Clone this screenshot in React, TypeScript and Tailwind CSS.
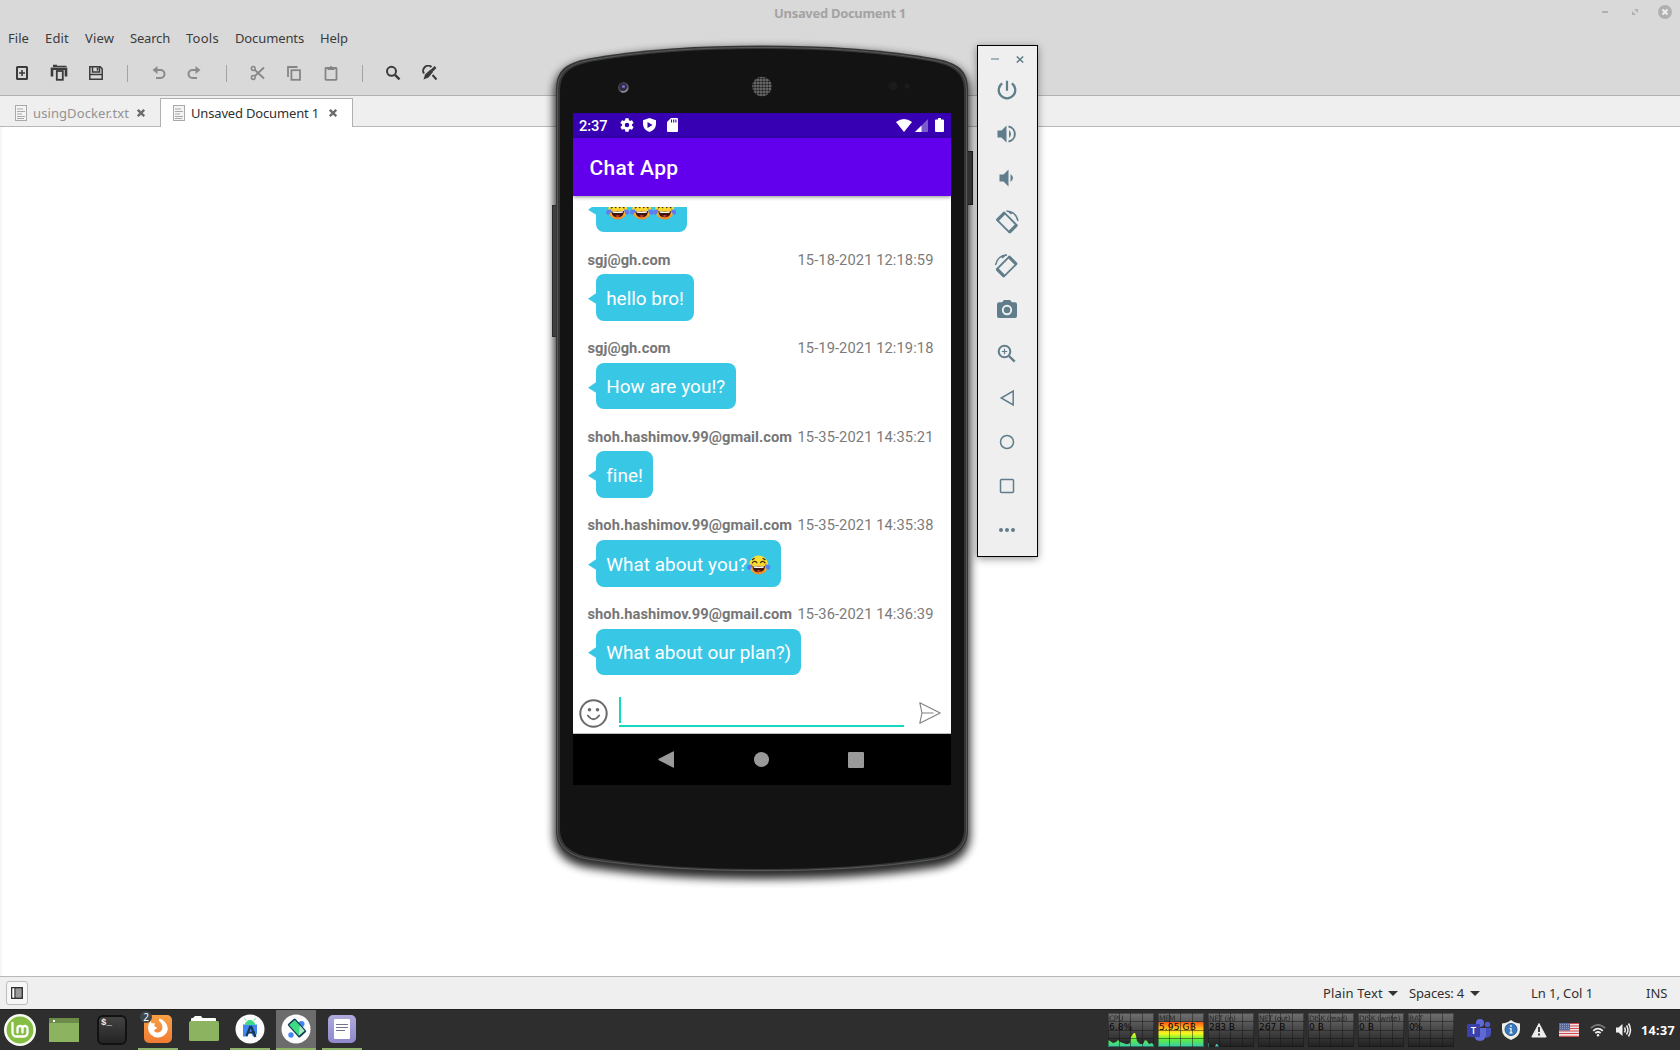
import React, { useLayoutEffect, useRef, useState } from "react";

// Single-line text whose tracking is computed so that it spans a given width.
function Fit({ w, className = "", children }: { w: number; className?: string; children: string }) {
  const ref = useRef<HTMLSpanElement>(null);
  const [ls, setLs] = useState(0);
  useLayoutEffect(() => {
    if (ref.current) {
      const natural = ref.current.getBoundingClientRect().width;
      setLs((w - natural) / children.length);
    }
  }, []);
  return (
    <span ref={ref} className={"inline-block shrink-0 whitespace-pre " + className} style={{ letterSpacing: ls + "px" }}>
      {children}
    </span>
  );
}

const menus: [string, number][] = [
  ["File", 21], ["Edit", 24], ["View", 29], ["Search", 40], ["Tools", 33], ["Documents", 69], ["Help", 28],
];

function Sep() {
  return <div className="h-[17px] w-px bg-[#a3a3a3]" />;
}

function Toolbar() {
  return (
    <div className="flex h-[49px] items-center pb-px pl-[14px] text-[#3b3b3b]">
      <svg className="h-4 w-4" viewBox="0 0 16 16" fill="none" stroke="currentColor" strokeWidth="2">
        <rect x="3" y="2" width="10" height="12" rx="0.5" />
        <path d="M5 8h6M8 5v6" strokeWidth="1.6" />
      </svg>
      <svg className="ml-5 h-[18px] w-[18px]" viewBox="0 0 18 18" fill="none" stroke="currentColor">
        <path d="M3 1.300h4M3 2.300h13.500" strokeWidth="1.300" />
        <path d="M2 12.500V4.800h14V12.500" strokeWidth="2.600" />
        <rect x="6.800" y="7" width="6" height="8.800" fill="#d9d9d9" strokeWidth="1.800" />
      </svg>
      <svg className="ml-5 h-4 w-4" viewBox="0 0 16 16" fill="none" stroke="currentColor" strokeWidth="1.500">
        <path d="M1.800 1.800h10.400l2 2v10.400H1.800zM4.500 2v5h7V2M2 9.500h12" />
        <path d="M9.500 2.500v3" strokeWidth="1.600" />
      </svg>
      <div className="ml-[23px]"><Sep /></div>
      <div className="ml-[23px] flex text-[#8b8b8b]">
        <svg className="h-4 w-4" viewBox="0 0 16 16" fill="none" stroke="currentColor" strokeWidth="2">
          <path d="M3 5h6.500a4 4 0 0 1 0 8H5" />
          <path d="M6.500 1L1.500 5l5 4z" fill="currentColor" stroke="none" />
        </svg>
        <svg className="ml-[19px] h-4 w-4" viewBox="0 0 16 16" fill="none" stroke="currentColor" strokeWidth="2">
          <path d="M13 5H6.500a4 4 0 0 0 0 8H11" />
          <path d="M9.500 1l5 4-5 4z" fill="currentColor" stroke="none" />
        </svg>
      </div>
      <div className="ml-[24px]"><Sep /></div>
      <div className="ml-[23px] flex text-[#858585]">
        <svg className="h-4 w-4" viewBox="0 0 16 16" fill="none" stroke="currentColor" strokeWidth="1.500">
          <circle cx="3.300" cy="3.500" r="1.900" />
          <circle cx="3.300" cy="12.500" r="1.900" />
          <path d="M4.800 4.800L14 13.500M4.800 11.200L14 2.500" strokeWidth="1.800" />
        </svg>
        <svg className="ml-5 h-4 w-4" viewBox="0 0 16 16" fill="none" stroke="currentColor" strokeWidth="1.800">
          <path d="M2 12V2h9.500" />
          <rect x="5.400" y="5.200" width="8.600" height="9.600" />
        </svg>
        <svg className="ml-[21px] h-4 w-4" viewBox="0 0 16 16" fill="none" stroke="currentColor" strokeWidth="1.800">
          <rect x="2.500" y="3" width="11" height="11.800" rx="0.500" />
          <path d="M4.500 5V2.500h2a1.500 1.500 0 0 1 3 0h2V5z" fill="currentColor" stroke="none" />
        </svg>
      </div>
      <div className="ml-[23px]"><Sep /></div>
      <svg className="ml-[22px] h-4 w-4" viewBox="0 0 16 16" fill="none" stroke="currentColor" strokeWidth="2">
        <circle cx="6.500" cy="6.300" r="4.500" />
        <path d="M10 9.800l4.500 4.500" strokeWidth="2.400" />
      </svg>
      <svg className="ml-[21px] h-4 w-4" viewBox="0 0 16 16" fill="none" stroke="currentColor" strokeWidth="2">
        <path d="M2 8.500A5 5 0 0 1 9.500 2" />
        <path d="M1.500 14.500l1.500-5 5.500-5 2.500 2.500-4.500 5.500z" fill="currentColor" stroke="none" />
        <path d="M9.500 6l4-4" strokeWidth="2.600" />
        <path d="M10.500 10l4 4.500" />
      </svg>
    </div>
  );
}

function DocIcon() {
  return (
    <svg className="h-4 w-3 shrink-0" viewBox="0 0 12 16" fill="none" stroke="#a9a9a9">
      <rect x="0.500" y="0.500" width="11" height="15" fill="#f4f4f4" />
      <path d="M2 4h6M2 6.500h8M2 9h5M2 11.500h8M2 13.500h7" />
    </svg>
  );
}

function TabClose() {
  return (
    <svg className="h-2 w-2 shrink-0" viewBox="0 0 8 8" stroke="#6b6b6b" strokeWidth="2.300">
      <path d="M0.800 0.800l6.400 6.400M7.200 0.800L0.800 7.200" />
    </svg>
  );
}

function Caret() {
  return (
    <svg className="h-[5px] w-[10px] shrink-0" viewBox="0 0 10 5" fill="#333">
      <path d="M0 0h10L5 5z" />
    </svg>
  );
}

const meters = [
  ["CPU", "6.8%"], ["MEM", "5.95 GB"], ["NET (in)", "283 B"], ["NET (out)", "267 B"],
  ["DISK (read)", "0 B"], ["DISK (write)", "0 B"], ["BAT", "0%"],
];
const labelW = [14, 16, 26.500, 31, 38, 41, 14];
const valueW = [23, 37, 26, 26.500, 15, 15, 13];

function Meter({ i }: { i: number }) {
  return (
    <div className="relative h-[34px] w-[46px] shrink-0 overflow-hidden bg-linear-to-b from-[#707070] to-[#202020]">
      <svg className="absolute inset-0 h-[34px] w-[46px]" viewBox="0 0 46 34">
        <defs>
          <linearGradient id="heat" x1="0" y1="9" x2="0" y2="34" gradientUnits="userSpaceOnUse">
            <stop offset="0" stopColor="#ff5a10" />
            <stop offset="0.300" stopColor="#ffc81e" />
            <stop offset="0.460" stopColor="#f4f81e" />
            <stop offset="0.680" stopColor="#63f03c" />
            <stop offset="1" stopColor="#35c9b0" />
          </linearGradient>
        </defs>
        {i === 0 && (
          <path fill="url(#heat)" d="M0 34V27l2 1 3 2 3-1 2-2 2 2 3 1 3 1 2 0 2-1 1-6 2-3 1-1 1 0 1 3 1 5 3 3 3 0 2-4 2 1 2 3 3-1 2 2V34z" />
        )}
        {i === 1 && <rect y="9" width="46" height="25" fill="url(#heat)" />}
        {i === 2 && <path fill="#4fc0b4" d="M0 34v-4h1v4zM7 34l1-3 1 0 1 1 1 2z" />}
        <path d="M11.500 0v34M22.500 0v34M34.500 0v34M0 8.500h46M0 17.500h46M0 25.500h46" stroke="#151515" strokeOpacity="0.480" fill="none" />
        <rect x="0.500" y="0.500" width="45" height="33" fill="none" stroke="#161616" strokeOpacity="0.450" />
      </svg>
      <div className="relative flex flex-col items-start pl-[1px] pt-[2px] font-['DejaVu_Sans'] text-[#1c1c1c]">
        <Fit w={labelW[i]} className="text-[7.500px] leading-[8px] opacity-80">{meters[i][0]}</Fit>
        <Fit w={valueW[i]} className="text-[9px] leading-[9px] text-[#080808]">{meters[i][1]}</Fit>
      </div>
    </div>
  );
}

function Taskbar() {
  return (
    <div className="flex h-[41px] items-start border-t border-[#202020] bg-[#2e2e2e]">
      <div className="flex h-10 w-[46px] items-center pl-1">
        <svg className="h-8 w-8" viewBox="0 0 32 32">
          <circle cx="16" cy="16" r="16" fill="#f7fbf2" />
          <circle cx="16" cy="16" r="13.400" fill="#86be43" />
          <path d="M8.500 9v9.500a4 4 0 0 0 4 4h7.500a3.500 3.500 0 0 0 3.500-3.500v-4.500a2.500 2.500 0 0 0-5 0v4M18.500 14.500a2.500 2.500 0 0 0-5 0v4" fill="none" stroke="#fff" strokeWidth="2.300" strokeLinecap="round" />
        </svg>
      </div>
      <div className="flex h-10 w-[46px] items-center pl-[3px]">
        <div className="h-6 w-[30px] bg-[#8cb360]">
          <div className="h-[5px] bg-[#6c8b49] pl-1 pt-0.5"><div className="h-0.5 w-0.5 bg-white" /></div>
        </div>
      </div>
      <div className="flex h-10 w-[46px] items-center pl-[5px]">
        <div className="h-[30px] w-[30px] rounded-[6px] border-2 border-[#121212] bg-linear-to-b from-[#434343] to-[#242424] pl-[2px] pt-[2px] font-['Liberation_Mono'] text-[9px] font-bold leading-[9px] text-[#eee]">$_</div>
      </div>
      <div className="relative flex h-10 w-10 items-center justify-center border-b-2 border-[#8db367]">
        <div className="flex h-7 w-7 items-center justify-center rounded-[5px] bg-linear-to-b from-[#f7a044] to-[#f17b34]">
          <svg className="h-[22px] w-[22px]" viewBox="0 0 22 22">
            <path d="M1 10c0-3 1-5 3-7l0.500 2.500C6 5 7 5 8 5.500 6.500 8 8 9 10 9.500c0 1.500-2 1.500-3 3 1 2.500 5 3 7.500 0C17 9 14 4 12 3c0-1 0-2 0.500-2.500C17 2 21 6 20.800 11.500A10 10 0 0 1 1 10z" fill="#fff" />
          </svg>
        </div>
        <div className="absolute left-[2px] top-[1px] flex h-3 w-3 items-center justify-center rounded-full bg-[#3b464d] font-['Noto_Sans'] text-[10px] text-white">2</div>
      </div>
      <div className="flex h-10 w-[52px] items-center justify-center">
        <svg className="h-7 w-[30px]" viewBox="0 0 30 28">
          <path d="M2 6V3q0-1 1-1h1l2-2h6l1.500 2H26q1 0 1 1v3z" fill="#fff" />
          <rect y="5" width="30" height="20" rx="1.500" fill="#8cb360" />
        </svg>
      </div>
      <div className="flex h-10 w-10 items-center justify-center border-b-2 border-[#8db367]">
        <svg className="h-[30px] w-[30px]" viewBox="0 0 30 30">
          <circle cx="15" cy="15" r="14.500" fill="#fcfcfc" />
          <path d="M8 10.500h14v9l-2 3h-2l-3-6-3 6H8z" fill="#4285f4" />
          <path d="M10.500 10.500a4.500 4 0 0 1 9 0zM11 6.500l-1.500-2M19 6.500l1.500-2" fill="#3ddc84" stroke="#3ddc84" />
          <path d="M15.500 12L11.500 22M16 12l4.500 11M12 18.500h8" fill="none" stroke="#123a54" strokeWidth="2.200" />
        </svg>
      </div>
      <div className="ml-1.5 flex h-10 w-10 items-center justify-center border-b-2 border-[#8db367] bg-[#6c6c6c]">
        <svg className="h-[30px] w-[30px]" viewBox="0 0 30 30">
          <circle cx="15" cy="15" r="14.500" fill="#fcfcfc" />
          <circle cx="10" cy="21" r="2.700" fill="#4285f4" />
          <circle cx="20.500" cy="10" r="3" fill="#4285f4" />
          <g transform="rotate(-42 16 14)">
            <rect x="11" y="5" width="10" height="18" rx="1.500" fill="#123a54" />
            <rect x="12.200" y="6.500" width="7.600" height="14.500" fill="#3ddc84" />
            <path d="M12.200 21l7.600-7v7z" fill="#a9e8c5" />
          </g>
        </svg>
      </div>
      <div className="ml-1.5 flex h-10 w-10 items-center justify-center border-b-2 border-[#8db367]">
        <div className="flex h-[28px] w-[28px] items-center justify-center rounded-[5px] bg-linear-to-b from-[#b0aadd] to-[#8d89cb]">
          <div className="flex h-5 w-4 flex-col gap-[2px] rounded-[1px] bg-white px-[2px] pt-[5px]">
            <div className="h-px bg-[#73738e]" /><div className="h-px bg-[#73738e]" />
            <div className="h-px w-[9px] bg-[#73738e]" />
          </div>
        </div>
      </div>
      <div className="ml-auto flex gap-1 pt-[3px]">
        {meters.map((m, i) => <Meter key={m[0]} i={i} />)}
      </div>
      <div className="flex h-10 w-[226px] items-center pl-[13px]">
        <svg className="h-6 w-6" viewBox="0 0 24 24">
          <circle cx="20.500" cy="6.500" r="2.700" fill="#5059c9" />
          <circle cx="13" cy="5" r="4" fill="#6068d4" />
          <path d="M16 10h8v6a4 4 0 0 1-6 3z" fill="#464eb8" />
          <path d="M7 10h12v7a6 6 0 0 1-12 0z" fill="#6068d4" />
          <rect y="6" width="13" height="13" rx="1" fill="#3a41a8" />
          <text x="3.700" y="15.700" fill="#fff" fontSize="9" fontWeight="700" fontFamily="Lato, sans-serif">T</text>
        </svg>
        <svg className="ml-2.5 h-5 w-5" viewBox="0 0 20 20">
          <path d="M10 0l3 2q3 1 6 1.500v6q0 7-9 10.500Q1 16.500 1 9.500v-6Q4 3 7 2z" fill="#eeeeea" />
          <circle cx="10" cy="9.500" r="6" fill="#3a7bbd" stroke="#24588f" />
          <path d="M10 5v2M8.500 8.500H10V13M8.500 13h3" stroke="#fff" strokeWidth="1.200" fill="none" />
        </svg>
        <svg className="ml-[10px] h-4 w-4" viewBox="0 0 16 16">
          <path d="M8 1.500L15.200 15H0.800z" fill="#eee" stroke="#eee" strokeLinejoin="round" />
          <path d="M8 5v5M8 11.500v2" stroke="#2e2e2e" strokeWidth="1.800" />
        </svg>
        <svg className="ml-3 h-[14px] w-5" viewBox="0 0 20 14">
          <rect width="20" height="14" fill="#efe4e3" />
          <path d="M0 0.500h20M0 3h20M0 5.500h20M0 8h20M0 10.500h20M0 13.300h20" stroke="#cf4b51" strokeWidth="1.200" />
          <rect width="11" height="7.500" fill="#56699e" />
          <path d="M1 1.500h9M1 3.500h9M1 5.500h9" stroke="#a9b4d0" strokeWidth="0.700" strokeDasharray="1 1" />
        </svg>
        <svg className="ml-[11px] h-[13px] w-4" viewBox="0 0 16 13" fill="none" stroke="#eee" strokeWidth="1.800">
          <path d="M0.800 4.200Q8-2.500 15.200 4.200" stroke="#777" />
          <path d="M3.200 6.800q4.800-4.300 9.600 0" />
          <path d="M5.300 9.200q2.700-2.400 5.400 0" />
          <circle cx="8" cy="11.300" r="1.200" fill="#eee" stroke="none" />
        </svg>
        <svg className="ml-[10px] h-4 w-4" viewBox="0 0 16 16" fill="none" stroke="#eee" strokeWidth="1.500">
          <path d="M0 5.500h2.500L6.500 2v12l-4-3.500H0z" fill="#eee" stroke="none" />
          <path d="M8.500 5.500q1.500 2.500 0 5M10.500 3.500q3 4.500 0 9M12.500 1.500q4 6.500 0 13" />
        </svg>
        <Fit w={34} className="ml-[9px] pt-[3px] font-['Noto_Sans'] text-[12.500px] font-bold text-white">14:37</Fit>
      </div>
    </div>
  );
}

// Tears-of-joy face; the drawing fills a 24×20 box.
function Joy() {
  return (
    <svg className="h-[20px] w-[23.400px] shrink-0" viewBox="0 0 24 20">
      <defs>
        <linearGradient id="joy" x1="0" y1="0" x2="0" y2="1">
          <stop offset="0.400" stopColor="#fde030" />
          <stop offset="1" stopColor="#f08423" />
        </linearGradient>
      </defs>
      <circle cx="12" cy="10" r="9.700" fill="url(#joy)" />
      <path d="M5.500 7.800q2.200-3 4.600-0.300M13.900 7.500q2.400-2.700 4.600 0.300M7.500 3.300l-2 1.200M16.500 3.300l2 1.200" stroke="#422b0d" strokeWidth="1.300" fill="none" strokeLinecap="round" />
      <path d="M5.500 11q6.500 1.200 13 0-0.300 6.500-6.500 6.500t-6.500-6.500z" fill="#3d160f" />
      <path d="M6.500 11.300q5.500 1 11 0l-0.500 1.500q-5 0.700-10 0z" fill="#fff" />
      <path d="M9.300 16.200q2.700-1.600 5.400 0-2.700 1.700-5.400 0z" fill="#ef4a4a" />
      <path d="M5.500 9.500Q0 8.800 0 12.500q0.300 2.700 2.800 2.300Q5 14.200 5.500 9.500zM18.500 9.500Q24 8.800 24 12.500q-0.300 2.700-2.800 2.300Q19 14.200 18.500 9.500z" fill="#5f7df0" />
    </svg>
  );
}

type Msg = { from?: string; fw: number; at: string; text: string; tw: number; joys: number };
const mail = "shoh.hashimov.99@gmail.com";
const messages: Msg[] = [
  { fw: 0, at: "", text: "", tw: 0, joys: 3 },
  { from: "sgj@gh.com", fw: 83, at: "15-18-2021 12:18:59", text: "hello bro!", tw: 77.700, joys: 0 },
  { from: "sgj@gh.com", fw: 83, at: "15-19-2021 12:19:18", text: "How are you!?", tw: 119.200, joys: 0 },
  { from: mail, fw: 204.500, at: "15-35-2021 14:35:21", text: "fine!", tw: 36, joys: 0 },
  { from: mail, fw: 204.500, at: "15-35-2021 14:35:38", text: "What about you?", tw: 141, joys: 1 },
  { from: mail, fw: 204.500, at: "15-36-2021 14:36:39", text: "What about our plan?)", tw: 185, joys: 0 },
];

function Message({ m }: { m: Msg }) {
  return (
    <div className="flex h-[88.600px] shrink-0 flex-col pt-[6.400px]">
      <div className="flex h-[24px] shrink-0 items-center justify-between pb-[4px] pr-[17.500px] text-[14.700px] leading-[17px] text-[#767676]">
        {m.from && <Fit w={m.fw} className="font-bold">{m.from}</Fit>}
        {m.from && <Fit w={136} className="text-[#7b7b7b]">{m.at}</Fit>}
      </div>
      <div className="flex h-[46.600px] shrink-0 items-center">
        <svg className="mt-[2px] h-[11px] w-[8.500px] shrink-0" viewBox="0 0 8.500 11" fill="#39c7e6">
          <path d="M8.500 0v11L0 5.700z" />
        </svg>
        <div className="flex h-full items-center rounded-[8px] bg-[#39c7e6] px-[10.200px] pt-[3px] text-[18.900px] text-white">
          {m.text && <Fit w={m.tw}>{m.text}</Fit>}
          {Array.from({ length: m.joys }, (_, k) => <Joy key={k} />)}
        </div>
      </div>
    </div>
  );
}

function PhoneScreen() {
  return (
    <div className="absolute left-[28px] top-[78px] flex h-[672px] w-[378px] flex-col overflow-hidden bg-white font-['Roboto']">
      <div className="flex h-[24.700px] shrink-0 items-center bg-[#3700b3] pl-[6px] text-white">
        <Fit w={28.500} className="pt-[2px] text-[14.700px] font-medium">2:37</Fit>
        <svg className="ml-[12px] h-[14px] w-[14px]" viewBox="2 2 20 20" fill="#fff">
          <path d="M19.140 12.940c.04-.3.060-.61.060-.94s-.02-.64-.07-.94l2.030-1.580a.49.49 0 0 0 .12-.61l-1.920-3.320a.49.49 0 0 0-.59-.22l-2.390.96c-.5-.38-1.030-.7-1.620-.94l-.36-2.540A.48.48 0 0 0 13.920 2.400h-3.840a.48.48 0 0 0-.47.410l-.36 2.540c-.59.240-1.130.570-1.620.940l-2.390-.96a.48.48 0 0 0-.59.220L2.740 8.870a.48.48 0 0 0 .12.610l2.030 1.580c-.05.300-.09.630-.09.940s.02.640.070.940l-2.030 1.580a.49.49 0 0 0-.12.610l1.920 3.320c.12.220.37.290.59.220l2.390-.96c.5.380 1.030.7 1.620.94l.36 2.540c.05.240.24.410.48.410h3.840c.24 0 .44-.17.47-.41l.36-2.540c.59-.24 1.130-.56 1.620-.94l2.390.96c.22.080.47 0 .59-.22l1.920-3.320a.48.48 0 0 0-.12-.61zM12 15.200a3.200 3.200 0 1 1 0-6.400 3.200 3.200 0 0 1 0 6.400z" />
        </svg>
        <svg className="ml-[9.500px] h-[14px] w-[13px]" viewBox="0 0 13 14">
          <path d="M6.500 0L13 2.200v4Q12.500 12 6.500 14 0.500 12 0 6.200v-4z" fill="#fff" />
          <path d="M4.500 4v6l5-3z" fill="#3700b3" />
        </svg>
        <svg className="ml-[11px] h-[14px] w-[11px]" viewBox="0 0 11 14">
          <path d="M4 0h6q1 0 1 1v12q0 1-1 1H1q-1 0-1-1V4z" fill="#fff" />
          <path d="M4.500 1.500v3M6.700 1.500v3M8.900 1.500v3" stroke="#3700b3" strokeWidth="1.100" />
        </svg>
        <svg className="ml-auto h-[13px] w-4" viewBox="0 0 16 13" fill="#fff"><path d="M0 3Q8-3 16 3L8 13z" /></svg>
        <svg className="ml-[3px] h-[13px] w-[13px]" viewBox="0 0 13 13" fill="#fff">
          <path d="M0 13L13 0v13z" opacity="0.350" /><path d="M0 13l6.500-6.500V13z" />
        </svg>
        <svg className="ml-[7px] mr-[7px] h-[14px] w-[9px]" viewBox="0 0 9 14" fill="#fff">
          <path d="M3 0h3v1.500h2q1 0 1 1V13q0 1-1 1H1q-1 0-1-1V2.500q0-1 1-1h2z" />
        </svg>
      </div>
      <div className="z-10 flex h-[58.600px] shrink-0 items-center bg-[#6200ee] pl-[16.500px] pt-[4px] text-white shadow-[0_1px_4px_rgba(0,0,0,0.45)]">
        <Fit w={89} className="text-[21px] font-medium">Chat App</Fit>
      </div>
      <div className="mt-[10.500px] flex h-[482px] shrink-0 flex-col justify-end overflow-hidden pb-[2px] pl-[14.500px]">
        {messages.map((m, k) => <Message key={k} m={m} />)}
      </div>
      <div className="flex h-[45.500px] shrink-0 items-start border-b border-[#bbb] pl-[6px]">
        <svg className="mt-[10px] h-[29px] w-[29px]" viewBox="0 0 29 29" fill="none" stroke="#6b6b6b" strokeWidth="2">
          <circle cx="14.500" cy="14.500" r="13.200" />
          <circle cx="10.500" cy="10.700" r="1.800" fill="#6b6b6b" stroke="none" />
          <circle cx="18.500" cy="10.700" r="1.800" fill="#6b6b6b" stroke="none" />
          <path d="M8.800 16.500q5.700 7.500 11.400 0" strokeLinecap="round" strokeWidth="1.800" />
        </svg>
        <div className="ml-[11px] mt-[8px] h-[30px] w-[285px] border-b-2 border-[#14d8c0]">
          <div className="h-[26px] w-[2px] bg-[#14d8c0]" />
        </div>
        <svg className="ml-[15px] mt-[13.500px] h-[22px] w-[22px]" viewBox="0 0 22 22" fill="none" stroke="#808080" strokeWidth="1.100" strokeLinejoin="round">
          <path d="M0.800 0.800L21.200 11 0.800 21.200 3 11zM3 11h11.500" />
        </svg>
      </div>
      <div className="flex grow items-center bg-black pl-[85px]">
        <svg className="h-[17px] w-4" viewBox="0 0 16 17" fill="#999"><path d="M15 0.500q1-0.500 1 0.500v15q0 1-1 0.500L0.800 9.200q-1-0.700 0-1.400z" /></svg>
        <div className="ml-[80px] h-[15px] w-[15px] rounded-full bg-[#999]" />
        <div className="ml-[79px] h-4 w-4 rounded-[1px] bg-[#999]" />
      </div>
    </div>
  );
}

const bodyPath = "M11 55C11 36 20 28 43 23.500C95 14 155 10.500 217 10.500C279 10.500 339 14 391 23.500C414 28 423 36 423 55V795C423 812 413 821.500 391 825.500C335 834 275 837 217 837C159 837 99 834 43 825.500C21 821.500 11 812 11 795Z";
const facePath = "M15 57C15 39 23 32 45 27C97 17.500 157 14 217 14C277 14 337 17.500 389 27C411 32 419 39 419 57V793C419 809 410 818 389 822C333 831 275 834 217 834C159 834 101 831 45 822C24 818 15 809 15 793Z";

function Phone() {
  return (
    <div className="absolute left-[545px] top-[35px] h-[870px] w-[434px]">
      <svg className="absolute inset-0 h-[870px] w-[434px] overflow-visible" viewBox="0 0 434 870">
        <defs>
          <filter id="soft" x="-20%" y="-20%" width="140%" height="140%"><feGaussianBlur stdDeviation="5" /></filter>
          <pattern id="mesh" width="3" height="3" patternUnits="userSpaceOnUse">
            <rect width="3" height="3" fill="#6a6a6a" /><circle cx="1.500" cy="1.500" r="1.100" fill="#1a1a1a" />
          </pattern>
        </defs>
        <path d={bodyPath} transform="translate(0 5)" fill="#000" stroke="#000" strokeWidth="4" opacity="0.850" filter="url(#soft)" />
        <rect x="7.500" y="170.500" width="5" height="131" fill="#3f3f3f" stroke="#2a2a2a" />
        <rect x="422.500" y="116.500" width="5" height="53" fill="#333" stroke="#1c1c1c" />
        <path d={bodyPath} fill="#343536" />
        <path d={bodyPath} fill="none" stroke="#58595b" transform="translate(1.500 2) scale(0.993 0.996)" />
        <path d={facePath} fill="#131313" />
        <circle cx="78.500" cy="52.500" r="5.300" fill="#5f5d66" />
        <circle cx="78" cy="52" r="4" fill="#302c48" />
        <circle cx="78.500" cy="51.500" r="1.600" fill="#6d6fbb" />
        <path d="M76 56.500a4.500 4.500 0 0 0 6.500-3" stroke="#aaa" strokeWidth="1" fill="none" />
        <circle cx="217" cy="51.500" r="9.800" fill="url(#mesh)" />
        <circle cx="348" cy="51" r="4.500" fill="#1a1a1a" />
        <circle cx="362" cy="51" r="2.600" fill="#1c1c1c" />
      </svg>
      <PhoneScreen />
    </div>
  );
}

const side = "h-6 w-6 shrink-0";

// Phone lying on its diagonal with a rotation arc above it.
function Rotate() {
  return (
    <>
      <path d="M2.200 10.200L9.500 2.800 21.500 15 14.200 22.200z" strokeWidth="1.800" strokeLinejoin="round" />
      <path d="M2.800 9.600L9 3.300M15 21.700L21 15.600" strokeWidth="3.200" strokeLinecap="round" />
      <path d="M11.500 1Q21 1.500 23 11M12.500 0.800l4 3.200" strokeWidth="1.400" />
    </>
  );
}

function EmulatorPanel() {
  return (
    <div className="absolute left-[977px] top-[45px] flex h-[512px] w-[61px] flex-col items-center border border-black bg-[#efefef] text-[#607d8b] shadow-[0_2px_8px_rgba(0,0,0,0.4)]">
      <div className="flex h-[26px] w-full shrink-0 items-center pl-[13px]">
        <div className="h-[2px] w-[8px] bg-[#a3b3bb]" />
        <svg className="ml-[17px] h-[7px] w-[8px]" viewBox="0 0 8 7" stroke="currentColor" strokeWidth="1.500"><path d="M0.800 0.500l6.400 6M7.200 0.500l-6.400 6" /></svg>
      </div>
      <div className="flex flex-col gap-5 pr-[2px] pt-[6px]">
        <svg className={side} viewBox="0 0 24 24" fill="none" stroke="currentColor" strokeWidth="2.200">
          <path d="M12 2.800v10M7.200 5.300a8.300 8.300 0 1 0 9.600 0" />
        </svg>
        <svg className={side} viewBox="0 0 24 24" fill="currentColor">
          <path d="M2.500 8.500h4l5-5v17l-5-5h-4zM14 8q4 4 0 8z" />
          <path d="M13.500 4.500a7.600 7.600 0 0 1 0 15" fill="none" stroke="currentColor" strokeWidth="2" />
        </svg>
        <svg className={side} viewBox="0 0 24 24" fill="currentColor">
          <path d="M4.500 8.500h4l5-5v17l-5-5h-4zM15.500 8q5 4 0 8z" />
        </svg>
        <svg className={side + " overflow-visible"} viewBox="0 0 24 24" fill="none" stroke="currentColor">
          <Rotate />
        </svg>
        <svg className={side + " overflow-visible"} viewBox="0 0 24 24" fill="none" stroke="currentColor">
          <g transform="matrix(-1 0 0 1 23.500 0)"><Rotate /></g>
        </svg>
        <svg className={side} viewBox="0 0 24 24" fill="currentColor">
          <path d="M9 2h6l2 2.300h3q2 0 2 2V18q0 2-2 2H4q-2 0-2-2V6.300q0-2 2-2h3z" />
          <circle cx="12" cy="12" r="4.200" fill="none" stroke="#efefef" strokeWidth="1.900" />
        </svg>
        <svg className={side} viewBox="0 0 24 24" fill="none" stroke="currentColor" strokeWidth="2">
          <circle cx="9.500" cy="9.500" r="5.800" /><path d="M14 14l5.700 5.700" strokeWidth="2.400" /><path d="M6.800 9.500h5.400M9.500 6.800v5.400" strokeWidth="1.200" />
        </svg>
        <svg className={side} viewBox="0 0 24 24" fill="none" stroke="currentColor" strokeWidth="1.500"><path d="M18.200 5v14L6.200 12z" /></svg>
        <svg className={side} viewBox="0 0 24 24" fill="none" stroke="currentColor" strokeWidth="1.500"><circle cx="12" cy="12" r="6.500" /></svg>
        <svg className={side} viewBox="0 0 24 24" fill="none" stroke="currentColor" strokeWidth="1.500"><rect x="5.500" y="5.500" width="13" height="13" rx="1" /></svg>
        <svg className={side} viewBox="0 0 24 24" fill="currentColor"><circle cx="6" cy="12" r="2" /><circle cx="12" cy="12" r="2" /><circle cx="18" cy="12" r="2" /></svg>
      </div>
    </div>
  );
}

export default function App() {
  return (
    <div className="relative flex h-[1050px] w-[1680px] flex-col overflow-hidden bg-white font-['Noto_Sans'] text-[13px] text-[#3b3b3b]">
      <div className="h-[95px] shrink-0 bg-[#d9d9d9]">
        <div className="relative flex h-[26px] items-center justify-center">
          <Fit w={132} className="pt-[2px] font-bold text-[#a3a3a3]">Unsaved Document 1</Fit>
          <div className="absolute right-2 top-[5px] flex items-center">
            <div className="h-[2px] w-[6px] bg-[#b0b0b0]" />
            <svg className="ml-6 h-[6px] w-[6px]" viewBox="0 0 6 6" fill="#b0b0b0"><path d="M2 0h4v4zM0 2v4h4z" /></svg>
            <svg className="ml-5 h-[14px] w-[14px]" viewBox="0 0 14 14">
              <circle cx="7" cy="7" r="7" fill="#b0b0b0" />
              <path d="M4.500 4.500l5 5M9.500 4.500l-5 5" stroke="#eee" strokeWidth="2" />
            </svg>
          </div>
        </div>
        <div className="flex h-[23px] items-center gap-[16px] pl-2">
          {menus.map(([t, w]) => <Fit key={t} w={w} className="leading-[20px]">{t}</Fit>)}
        </div>
        <Toolbar />
      </div>
      <div className="flex h-[32px] shrink-0 items-end border-t border-[#b2b2b2] bg-[#efefef]">
        <div className="flex h-[31px] w-[160px] items-center border-b border-[#b8b8b8] pl-[15px] pt-[3px] text-[#929292]">
          <DocIcon /><Fit w={96} className="ml-[6px] pt-[2px]">usingDocker.txt</Fit><span className="ml-[8px] flex"><TabClose /></span>
        </div>
        <div className="flex h-[29px] w-[193px] items-center border-x border-t border-[#b0b0b0] bg-white pl-3 text-[#303030]">
          <DocIcon /><Fit w={128} className="ml-[6px] pt-[2px]">Unsaved Document 1</Fit><span className="ml-[10px] flex"><TabClose /></span>
        </div>
        <div className="h-[31px] grow border-b border-[#b8b8b8]" />
      </div>
      <div className="grow border-l-2 border-[#f6f6f6] bg-white" />
      <div className="flex h-[33px] shrink-0 items-center border-t border-[#b8b8b8] bg-[#efefef] pl-[6px] text-[#303030]">
        <div className="flex h-6 w-[22px] items-center justify-center rounded-[3px] border border-[#bdbdbd] bg-[#f7f7f7]">
          <svg className="h-3 w-3" viewBox="0 0 12 12"><rect x="0.700" y="0.700" width="10.600" height="10.600" fill="#999" stroke="#333" strokeWidth="1.400" /><path d="M1.400 1.400h2v9.200h-2z" fill="#fff" /><path d="M4 1v10" stroke="#333" /></svg>
        </div>
        <Fit w={60} className="ml-[1295px] pt-[2px]">Plain Text</Fit>
        <span className="ml-[5px] flex pt-px"><Caret /></span>
        <Fit w={55} className="ml-[11px] pt-[2px]">Spaces: 4</Fit>
        <span className="ml-[6px] flex pt-px"><Caret /></span>
        <Fit w={62} className="ml-[51px] pt-[2px]">Ln 1, Col 1</Fit>
        <Fit w={21.500} className="ml-[53px] pt-[2px]">INS</Fit>
      </div>
      <Taskbar />
      <Phone />
      <EmulatorPanel />
    </div>
  );
}
